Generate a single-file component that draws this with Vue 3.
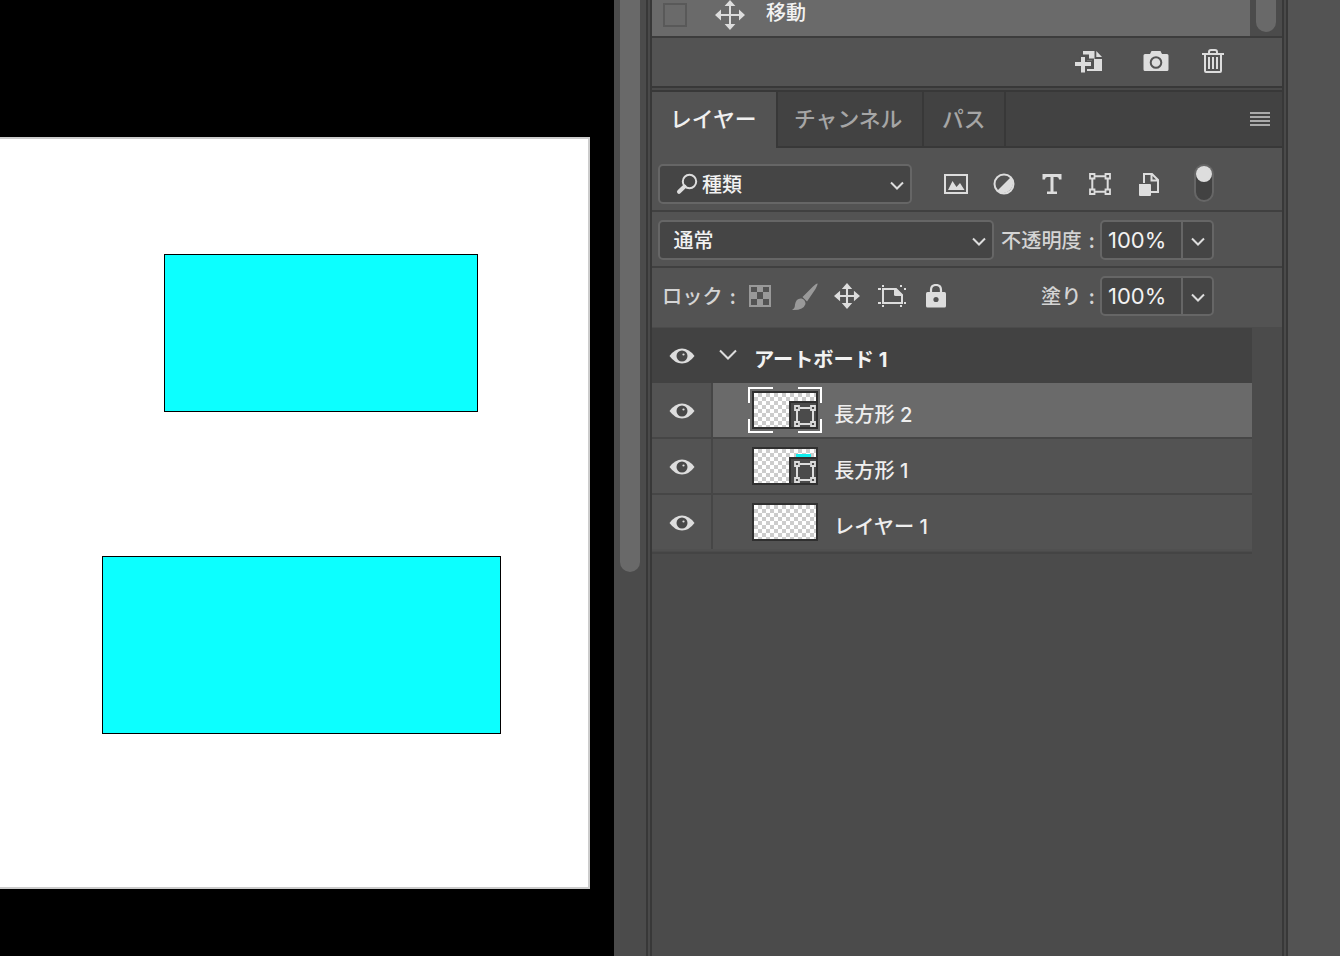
<script setup>
const layers = [
  { name: 'アートボード 1', kind: 'group' },
  { name: '長方形 2', kind: 'shape', selected: true },
  { name: '長方形 1', kind: 'shape', mark: true },
  { name: 'レイヤー 1', kind: 'pixel' },
]
</script>

<template>
  <div class="app">
    <main class="canvas">
      <div class="artboard">
        <svg width="588" height="748" viewBox="0 139 588 748">
          <g fill="#0cffff" stroke="#000" stroke-width="1">
            <rect x="164.5" y="254.5" width="313" height="157" />
            <rect x="102.5" y="556.5" width="398" height="177" />
          </g>
        </svg>
      </div>
    </main>
    <div class="vscroll"><div class="thumb"></div></div>
    <div class="gutter"></div>

    <aside class="panels">
      <section class="history">
        <div class="entry">
          <div class="box"></div>
          <svg class="move" width="30" height="30" viewBox="0 0 30 30">
            <path fill="#ddd" d="M15 0l5.400 6H16v8h8V9.600L30 15l-6 5.400V16h-8v8h4.400L15 30l-5.400-6H14v-8H6v4.400L0 15l6-5.400V14h8V6H9.600z" />
          </svg>
          <span class="label">移動</span>
        </div>
        <div class="hscroll"><div class="hthumb"></div></div>
      </section>
      <section class="actions">
        <svg width="28" height="24" viewBox="0 0 28 24">
          <path fill="#ddd" d="M8 1h11.500v8H27v12H12V5.500H8zM21.300 1L27 7h-5.700z" />
          <path fill="#ddd" stroke="#535353" stroke-width="3" d="M6 7h4v5h6v4h-6v6.500H6V16H0v-4h6z" />
          <path fill="none" stroke="#535353" stroke-width="2" d="M8 5.500h5V9.500h5V18h-6" />
          <path fill="#ddd" d="M6 7h4v5h6v4h-6v6.500H6V16H0v-4h6z" />
        </svg>
        <svg class="camera" width="26" height="22" viewBox="0 0 26 22">
          <path fill="#ddd" d="M2 4h5l1.500-3h9L19 4h5q1.500 0 1.500 1.500v14q0 1.500-1.500 1.500H2q-1.500 0-1.500-1.500v-14Q.5 4 2 4z" />
          <circle cx="13" cy="12.500" r="5.300" fill="#ddd" stroke="#535353" stroke-width="2" />
        </svg>
        <svg class="trash" width="22" height="26" viewBox="0 0 22 26" fill="none" stroke="#ddd" stroke-width="2">
          <path d="M0 6h22M7 5.500V4q0-2 2-2h4q2 0 2 2v1.500M3 6.500V23q0 1 1 1h14q1 0 1-1V6.500M7 9v12M11 9v12M15 9v12" />
        </svg>
      </section>
      <div class="divider"></div>

      <nav class="tabs">
        <div class="tab t1 active">レイヤー</div>
        <div class="tab t2">チャンネル</div>
        <div class="tab t3">パス</div>
        <div class="burger"><i></i><i></i><i></i><i></i></div>
      </nav>

      <section class="filters">
        <div class="select kind">
          <svg class="glass" width="22" height="22" viewBox="0 0 22 22" fill="none" stroke="#ddd">
            <circle cx="13.500" cy="8.500" r="6.700" stroke-width="2" />
            <path d="M8.500 13.500L3 18.800" stroke-width="4" stroke-linecap="round" />
          </svg>
          <span>種類</span>
          <svg class="chev" width="14" height="10" viewBox="0 0 14 10"><path d="M1 1.500l6 6 6-6" /></svg>
        </div>
        <svg class="f1" width="24" height="20" viewBox="0 0 24 20">
          <path fill="none" stroke="#ddd" stroke-width="2" d="M1 1h22v18H1z" />
          <path fill="#ddd" d="M4 16l4.500-9 4 6 3.500-4 4.500 7z" />
        </svg>
        <svg class="f2" width="22" height="22" viewBox="0 0 22 22">
          <circle cx="11" cy="11" r="9.500" fill="none" stroke="#ddd" stroke-width="2" />
          <path fill="#ddd" d="M18 4A10 10 0 0 1 4 18z" />
        </svg>
        <svg class="f3" width="20" height="22" viewBox="0 0 20 22">
          <path fill="#ddd" d="M.5 1h19v5.500h-2.500Q17 4 15 4h-3.500V18.500h3.500V21H5v-2.500h3.500V4H5Q3 4 3 6.500H.5z" />
        </svg>
        <svg class="f4" width="22" height="22" viewBox="0 0 22 22" fill="none" stroke="#ddd" stroke-width="2">
          <path d="M6 3.300h10M6 18.700h10M3.300 6v10M18.700 6v10" />
          <path d="M1 1h4.500v4.500H1zM16.500 1H21v4.500h-4.500zM1 16.500h4.500V21H1zM16.500 16.500H21V21h-4.500z" stroke-width="1.800" />
        </svg>
        <svg class="f5" width="22" height="24" viewBox="0 0 22 24">
          <path d="M6 11V2h8l6 6v12h-7M13.500 2v6.500H20" fill="none" stroke="#ddd" stroke-width="2" />
          <path d="M1 12h11q1 0 1 1v10q0 1-1 1H2q-1 0-1-1z" fill="#ddd" />
        </svg>
        <div class="toggle"><div class="knob"></div></div>
      </section>

      <section class="blend">
        <div class="select mode">
          <span>通常</span>
          <svg class="chev" width="14" height="10" viewBox="0 0 14 10"><path d="M1 1.500l6 6 6-6" /></svg>
        </div>
        <span class="caption opacity">不透明度<b>:</b></span>
        <div class="number"><span>100%</span><div class="drop"><svg class="chev" width="14" height="10" viewBox="0 0 14 10"><path d="M1 1.500l6 6 6-6" /></svg></div></div>
      </section>

      <section class="locks">
        <span class="caption lock">ロック<b>:</b></span>
        <svg class="l1" width="22" height="22" viewBox="0 0 22 22">
          <path fill="none" stroke="#999" stroke-width="2" d="M1 1h20v20H1z" />
          <path fill="#999" d="M8 2h6v5H8zM2 7h6v7H2zM14 7h6v7h-6zM8 14h6v6H8z" />
        </svg>
        <svg class="l2" width="28" height="28" viewBox="0 0 28 28">
          <path fill="#999" d="M26.500.5Q27 1 24.500 6L16 18.500 11.500 14 22 3.500Q25.500.2 26.500.5zM10.500 15.500q4 1 4 5.500-2 6.500-13.500 6 3-1.500 3-5.500 1-6.500 6.500-6z" />
        </svg>
        <svg class="l3" width="26" height="26" viewBox="0 0 30 30">
          <path fill="#ddd" d="M15 0l6 7h-4.800v6.800H23V9l7 6-7 6v-4.800h-6.800V23H21l-6 7-6-7h4.800v-6.800H7V21l-7-6 7-6v4.800h6.800V7H9z" />
        </svg>
        <svg class="l4" width="28" height="24" viewBox="0 0 28 24">
          <path d="M5 5h13l6 6v8H5z" fill="none" stroke="#ddd" stroke-width="2" />
          <path d="M17 4l8 8h-7.500q-1.500 0-1.500-1.500V4z" fill="#ddd" />
          <path d="M0 4h3v2H0zM4 1h2v2H4zM22 1h2v2h-2zM26 4h2v2h-2zM0 18h3v2H0zM4 21h2v2H4zM22 21h2v2h-2zM26 18h2v2h-2z" fill="#ddd" />
        </svg>
        <svg class="l5" width="20" height="24" viewBox="0 0 20 24">
          <path d="M5 9V6q0-5 5-5t5 5v3" fill="none" stroke="#ddd" stroke-width="2.200" />
          <rect y="8" width="20" height="15.500" rx="1.500" fill="#ddd" />
          <circle cx="10" cy="15.500" r="2.600" fill="#535353" />
        </svg>
        <span class="caption fill">塗り<b>:</b></span>
        <div class="number"><span>100%</span><div class="drop"><svg class="chev" width="14" height="10" viewBox="0 0 14 10"><path d="M1 1.500l6 6 6-6" /></svg></div></div>
      </section>

      <section class="list">
        <div v-for="l in layers" :key="l.name" class="row" :class="[l.kind, { selected: l.selected }]">
          <div class="eye">
            <svg width="26" height="16" viewBox="0 0 26 16">
              <path fill="#ddd" d="M.5 8Q6 .5 13 .5T25.500 8Q20 15.500 13 15.500T.5 8z" />
              <circle cx="13" cy="8" r="5.500" fill="#484848" />
              <circle cx="14.500" cy="6.500" r="1.100" fill="#ddd" />
            </svg>
          </div>
          <div class="body">
            <svg v-if="l.kind === 'group'" class="twist" width="18" height="12" viewBox="0 0 18 12">
              <path d="M1 1.500l8 8 8-8" fill="none" stroke="#ddd" stroke-width="2" />
            </svg>
            <div v-else class="pic">
              <div v-if="l.mark" class="mark"></div>
              <div v-if="l.kind === 'shape'" class="badge">
                <svg width="22" height="22" viewBox="0 0 22 22" fill="none" stroke="#ddd" stroke-width="2">
                  <path d="M6 3h10M6 19h10M3 6v10M19 6v10" />
                  <path d="M1 1h4v4H1zM17 1h4v4h-4zM1 17h4v4H1zM17 17h4v4h-4z" stroke-width="1.800" />
                </svg>
              </div>
              <svg v-if="l.selected" class="corners" width="74" height="46" viewBox="0 0 74 46">
                <path d="M25 1H1v15M50 1h23v15M1 32v13h24M50 45h23V32" fill="none" stroke="#fff" stroke-width="2" />
              </svg>
            </div>
            <span class="name">{{ l.name }}</span>
          </div>
        </div>
      </section>
    </aside>

    <div class="gutter"></div>
    <div class="dock"></div>
  </div>
</template>

<style>
body { margin: 0; background: #535353; overflow: hidden; }
</style>

<style scoped>
* { box-sizing: border-box; }
svg { display: block; flex: none; }
.app { display: flex; width: 1340px; height: 956px; overflow: hidden; font-family: Inter, "Noto Sans CJK JP", sans-serif; color: #e8e8e8; white-space: nowrap; }
.canvas { width: 614px; background: #000; padding-top: 137px; }
.artboard { width: 590px; height: 752px; background: #fff; border: solid #ccc; border-width: 2px 2px 2px 0; }
.vscroll { width: 32px; background: #4b4b4b; padding-left: 6px; }
.thumb { width: 20px; height: 572px; background: #696969; border-radius: 0 0 10px 10px; }
.gutter { width: 6px; background: #4a4a4a; border: solid #383838; border-width: 0 2px; }
.dock { flex: 1; background: #535353; }
.panels { width: 630px; display: flex; flex-direction: column; background: #4b4b4b; }
.history { height: 38px; display: flex; border-bottom: 2px solid #3c3c3c; }
.entry { width: 598px; height: 36px; background: #6a6a6a; display: flex; }
.box { width: 24px; height: 24px; margin: 3px 0 0 11px; border: 2px solid #595959; }
.move { margin: 0 0 0 28px; }
.label { margin: -2px 0 0 21px; font-size: 20px; line-height: 30px; font-weight: 500; color: #f2f2f2; }
.hscroll { padding-left: 6px; }
.hthumb { width: 20px; height: 32px; background: #696969; border-radius: 0 0 10px 10px; }
.actions { height: 48px; background: #535353; display: flex; padding: 12px 0 0 423px; }
.camera { margin: 0 0 0 39.5px; }
.trash { margin: -2px 0 0 33.5px; }
.divider { height: 6px; background: #4a4a4a; border: solid #383838; border-width: 2px 0; }
.tabs { height: 56px; display: flex; background: #424242; }
.tab { height: 56px; padding-left: 18px; font-size: 21.8px; font-weight: 500; line-height: 54px; color: #a6a6a6; border-right: 2px solid #383838; border-bottom: 2px solid #383838; }
.t1 { width: 126px; color: #f0f0f0; background: #535353; border-bottom: 0; }
.t2 { width: 146px; padding-left: 16px; }
.t3 { width: 82px; }
.burger { flex: 1; border-bottom: 2px solid #383838; padding: 20px 12px 0 0; display: flex; flex-direction: column; align-items: flex-end; gap: 2px; }
.burger i { width: 20px; height: 2px; background: #aaa; }
.filters { height: 64px; background: #535353; border-bottom: 2px solid #404040; display: flex; padding: 16px 0 0 6px; }
.select { height: 40px; display: flex; align-items: center; background: #454545; border: 2px solid #666; border-radius: 5px; font-size: 20px; font-weight: 500; color: #f2f2f2; }
.select span { line-height: 30px; margin-top: 2px; }
.select .chev { margin: 3px 6px 0 auto; }
.chev path { fill: none; stroke: #ddd; stroke-width: 2; }
.kind { width: 254px; }
.glass { margin: 0 4px 0 16px; }
.f1 { margin: 10px 0 0 32px; }
.f2 { margin: 9px 0 0 24.5px; }
.f3 { margin: 9px 0 0 27px; }
.f4 { margin: 9px 0 0 27.5px; }
.f5 { margin: 8px 0 0 27px; }
.toggle { width: 20px; height: 38px; margin: 0 0 0 34px; border: 2px solid #666; border-radius: 10px; background: #424242; }
.knob { width: 16px; height: 16px; border-radius: 50%; background: #ddd; }
.blend { height: 56px; background: #535353; border-bottom: 2px solid #404040; display: flex; padding: 8px 0 0 6px; }
.mode { width: 336px; padding-left: 13.5px; }
.caption { font-size: 20.2px; font-weight: 500; line-height: 36px; padding-top: 3px; color: #d4d4d4; display: flex; justify-content: space-between; }
.caption b { font-weight: 600; }
.opacity { width: 94px; margin-left: 7px; }
.number { width: 114px; height: 40px; margin-left: 5px; display: flex; background: #454545; border: 2px solid #666; border-radius: 5px; }
.number span { width: 79px; padding-left: 6px; font-size: 22px; line-height: 36px; color: #f2f2f2; }
.drop { flex: 1; border-left: 2px solid #666; display: flex; align-items: center; justify-content: center; padding-top: 4px; }
.locks { height: 60px; background: #535353; border-bottom: 1px solid #4b4b4b; display: flex; padding: 8px 0 0 10px; }
.lock { width: 74px; }
.l1 { margin: 9px 0 0 13px; }
.l2 { margin: 7px 0 0 20px; }
.l3 { margin: 7px 0 0 15px; }
.l4 { margin: 8px 0 0 18px; }
.l5 { margin: 8px 0 0 20px; }
.fill { width: 54px; margin-left: 95px; }
.list { width: 600px; height: 226px; border-bottom: 2px solid #444; }
.row { height: 56px; display: flex; background: #535353; border-bottom: 2px solid #464646; }
.row:last-child { border-bottom-color: #505050; }
.row.group { height: 55px; background: #424242; border-bottom: 0; }
.eye { width: 61px; display: flex; align-items: center; justify-content: center; padding: 1px 0 0 1px; border-right: 2px solid #464646; }
.group .eye { border-color: transparent; padding-top: 1px; }
.body { flex: 1; display: flex; }
.selected .body { background: #6a6a6a; }
.twist { margin: 21px 0 0 6px; }
.pic { position: relative; width: 66px; height: 38px; margin: 8px 0 0 39px; border: 2px solid #303030; background: conic-gradient(#ccc 25%, #fff 0 50%, #ccc 0 75%, #fff 0) 0 0 / 8px 8px; }
.badge { position: absolute; right: 0; bottom: 0; width: 27px; height: 26px; padding: 2px 0 0 3px; background: #4b4b4b; border: solid #303030; border-width: 2px 0 0 2px; }
.mark { position: absolute; left: 42px; top: 5px; width: 15px; height: 4px; background: #1ee; }
.corners { position: absolute; left: -6px; top: -6px; }
.name { margin: 17px 0 0 16px; font-size: 20.2px; font-weight: 500; line-height: 30px; color: #eee; }
.group .name { margin: 17px 0 0 17px; font-weight: 700; color: #f2f2f2; }
</style>
